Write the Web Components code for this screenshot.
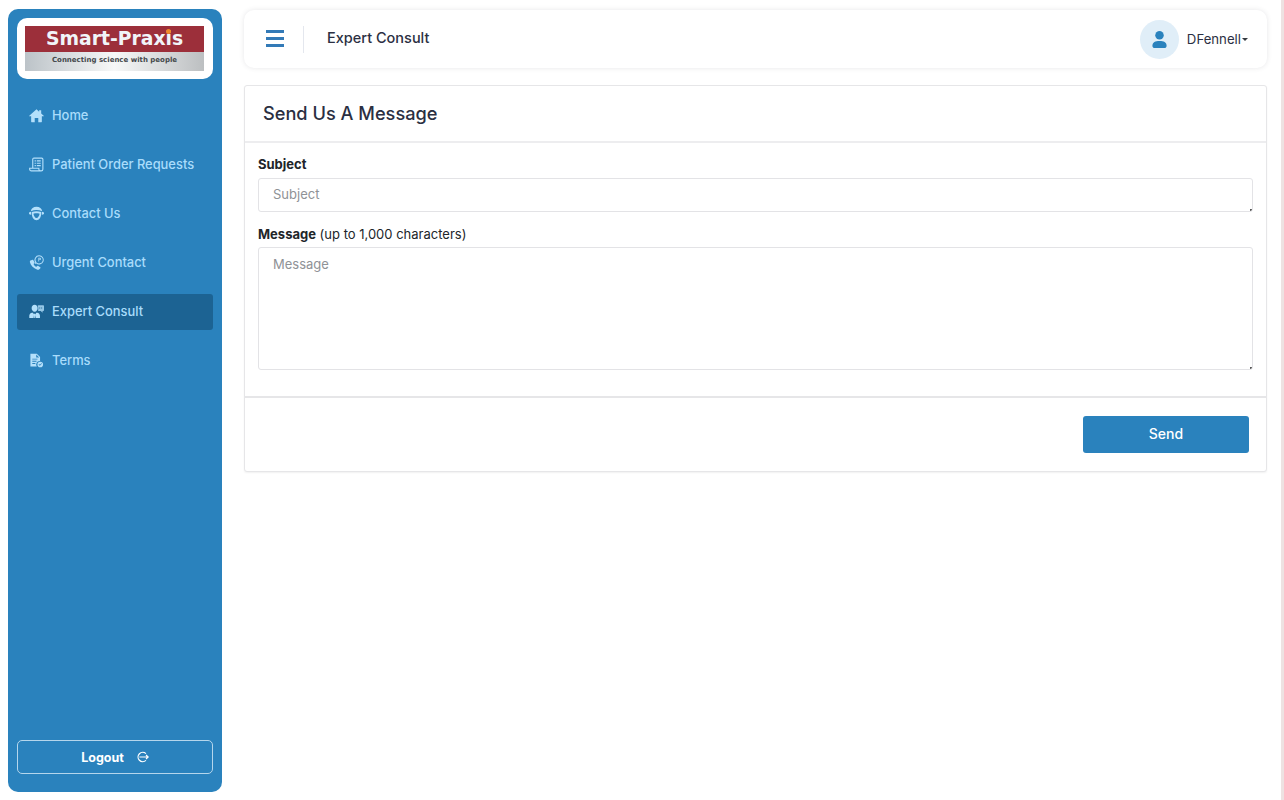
<!DOCTYPE html>
<html>
<head>
<meta charset="utf-8">
<title>Expert Consult</title>
<style>
  html, body { margin: 0; height: 100%; background: #fff; }
  body { font-family: Inter, "Liberation Sans", sans-serif; color: #212529; overflow: hidden; }
</style>
</head>
<body>
<app-shell>
  <side-bar slot="side">
    <nav-item icon="home">Home</nav-item>
    <nav-item icon="orders">Patient Order Requests</nav-item>
    <nav-item icon="contact">Contact Us</nav-item>
    <nav-item icon="urgent">Urgent Contact</nav-item>
    <nav-item icon="expert" active>Expert Consult</nav-item>
    <nav-item icon="terms">Terms</nav-item>
  </side-bar>
  <top-bar title="Expert Consult" user="DFennell"></top-bar>
  <message-card></message-card>
</app-shell>

<script>
const icons = {
  home: '<path d="M8 1.300 .3 8.200c-.3.3-.1.7.3.7H2.300v5.800c0 .3.2.5.5.5h3.300v-4.500h3.800V15.200h3.300c.3 0 .5-.2.5-.5V8.900h1.700c.4 0 .6-.4.3-.7L13 5.900V2.300h-2.200v1.600z"/>',
  orders: '<path fill="none" stroke="#b4e0fb" stroke-width="1.200" d="M4 12V2.500C4 1.700 4.500 1.200 5.300 1.200h8.200c.8 0 1.300.5 1.300 1.300V13c0 1-.7 1.800-1.800 1.800H2.500C1.400 14.800.7 14 .7 12.900V12H10.500v1c0 1 .8 1.800 2 1.800"/><path d="M6 3.500h1.300v1.300H6zm2.300 0h4.200v1.300H8.300zM6 6h1.300v1.300H6zm2.300 0h4.200v1.300H8.300zM6 8.500h1.300v1.300H6zm2.300 0h4.200v1.300H8.300z"/>',
  contact: '<path d="M8 .8c3.300 0 5.700 1.800 6 4.700-2-.8-3.900-1.200-6-1.200s-4 .4-6 1.200C2.300 2.600 4.700 .8 8 .8z"/><path d="M1 6.300 2.300 6.100v3.200L1 9.100C.2 8.900 0 8.400 0 7.700s.2-1.200 1-1.400zm14 0-1.300-.2v3.200l1.300-.2c.8-.2 1-.7 1-1.400s-.2-1.200-1-1.400z"/><path fill-rule="evenodd" d="M3 6.500C4.600 6 6.300 5.700 8 5.700s3.400.3 5 .8v1.700c0 3.300-2 6.900-5 6.900S3 11.500 3 8.200zm1.700 1.700c.3 1.900 1.600 4.600 3.300 4.600s3-2.700 3.300-4.600C9 7.700 7 7.700 4.700 8.200z"/>',
  urgent: '<path d="M3.300 5.300c.4-.3.900-.3 1.200.1l1.400 2.200c.2.300.2.700-.1 1l-.9.900c.5 1.300 1.600 2.500 3 3.100l1-.9c.3-.2.700-.3 1-.1l2.100 1.400c.4.300.5.800.1 1.100l-1.100 1.100c-.5.500-1.300.7-2 .5C4.300 13.800 1.600 11 .9 7.500c-.1-.6.100-1.300.5-1.700z"/><path fill-rule="evenodd" d="M10.800 .3a4.900 4.900 0 1 1-3.100 8.700L6 9.600l.6-1.800A4.900 4.900 0 0 1 10.800 .3zm0 1.100A3.800 3.800 0 0 0 7.800 7.500l-.1.500.5-.1a3.800 3.800 0 1 0 2.600-6.500z"/><path d="M10 3h1.300c.9 0 1.400.5 1.400 1.200s-.5 1.200-1.400 1.200h-.5V6.900H10zm.8.700v1h.4c.4 0 .6-.2.6-.5s-.2-.5-.6-.5z"/>',
  expert: '<path d="M6 .7c1.900 0 3.200 1.500 3.200 3.500S7.900 8.200 6 8.200 2.800 6.200 2.800 4.200 4.100 .7 6 .7z"/><path d="M.3 15v-2.500c0-1.800 1.200-3 3-3.300h.9l1.200 2-.5 3.800zm11.400 0v-2.500c0-1.800-1.200-3-3-3.300h-.9l-1.200 2 .5 3.800zM6 10l.8 1-.4 4h-.8l-.4-4z"/><path fill-rule="evenodd" d="M10 1.300h5.200c.5 0 .8.300.8.800v4.600c0 .5-.3.800-.8.800h-.7V9.300L12.500 7.500H10c-.1 0-.2 0-.3-.1.300-.9.300-4.500-.5-5.500.2-.4.500-.6.800-.6z" opacity=".8"/><path fill="#1c6393" d="M11 3.800h1v1h-1zm2 0h1v1h-1z"/>',
  terms: '<path fill-rule="evenodd" d="M1.500 .7h6.800L11.800 4.200v4.500a3.700 3.700 0 0 0-3.500 5.800H1.500zM7.700 1.700V4.900h3.100zM3.500 6v1h5.500V6zm0 2.300v1h4.500v-1zm0 2.300v1h3.300v-1z"/><path fill-rule="evenodd" d="M12 9.200a3 3 0 1 1 0 6 3 3 0 0 1 0-6zm1.300 1.600-1.700 1.800-.8-.8-.6.6 1.400 1.300 2.300-2.400z"/>'
}

class AppShell extends HTMLElement {
  constructor () {
    super()
    this.attachShadow({ mode: 'open' })
    this.shadowRoot.innerHTML = `
      <style>
        :host { display: flex; height: 800px; box-sizing: border-box; padding: 9px 14px 8px 8px; gap: 22px; border-right: 3px solid #eee2e2; }
        .main { flex: 1; min-width: 0; display: flex; flex-direction: column; gap: 17px; padding-top: 1px; }
      </style>
      <slot name="side"></slot>
      <div class="main"><slot></slot></div>`
  }
}

class SideBar extends HTMLElement {
  constructor () {
    super()
    this.attachShadow({ mode: 'open' })
    this.shadowRoot.innerHTML = `
      <style>
        :host { display: flex; flex-direction: column; width: 214px; flex: none; box-sizing: border-box; background: #2a82bd; border-radius: 10px; padding: 9px 9px 18px 9px; }
        .logo-box { height: 61px; box-sizing: border-box; background: #fff; border-radius: 10px; padding: 8px 9px 8px 8px; display: flex; }
        .logo { flex: 1; display: flex; flex-direction: column; }
        .brand { height: 26px; background: #9c2f3a; color: #f1f4f8; font: 700 18.800px/26px "DejaVu Sans", sans-serif; text-align: center; position: relative; white-space: nowrap; }
        .dot { position: absolute; left: 141px; top: 3px; width: 5px; height: 5px; border-radius: 50%; background: #ef8a2a; }
        .tag { height: 19px; background: linear-gradient(90deg, #bcc3c8, #f7f8f8 50%, #bcbfc1); color: #44484b; font: 700 7px/17px "DejaVu Sans", sans-serif; text-align: center; white-space: nowrap; }
        nav { display: flex; flex-direction: column; gap: 13px; margin-top: 19px; flex: 1; }
        button { font: 700 12.500px Inter, sans-serif; color: #fff; height: 34px; background: transparent; border: 1px solid #b5d6ec; border-radius: 5px; display: flex; align-items: center; justify-content: center; gap: 11px; padding: 0; }
        svg { width: 14px; height: 14px; fill: none; stroke: #fff; stroke-width: 1.400; }
      </style>
      <div class="logo-box">
        <div class="logo">
          <div class="brand">Smart-Praxis<span class="dot"></span></div>
          <div class="tag">Connecting science with people</div>
        </div>
      </div>
      <nav><slot></slot></nav>
      <button>Logout <svg viewBox="0 0 16 16"><path d="M12.500 4.200A5.300 5.300 0 1 0 12.500 11.800M5 8h10M12.600 5.800 15 8l-2.400 2.200" /></svg></button>`
  }
}

class NavItem extends HTMLElement {
  constructor () {
    super()
    this.attachShadow({ mode: 'open' })
    this.shadowRoot.innerHTML = `
      <style>
        :host { display: flex; align-items: center; height: 36px; box-sizing: border-box; padding: 0 0 1px 12px; gap: 8px; color: #a9dcfb; font: 500 12.900px Inter, sans-serif; border-radius: 3px; }
        :host([active]) { background: #1c6393; }
        svg { width: 15px; height: 15px; fill: #b4e0fb; flex: none; }
      </style>
      <svg viewBox="0 0 16 16">${icons[this.getAttribute('icon')]}</svg>
      <slot></slot>`
  }
}

class TopBar extends HTMLElement {
  constructor () {
    super()
    this.attachShadow({ mode: 'open' })
    this.shadowRoot.innerHTML = `
      <style>
        :host { display: flex; align-items: center; height: 58px; flex: none; background: #fff; border-radius: 10px; box-shadow: 0 0 5px rgba(60, 60, 80, .13); padding: 0 19px 0 22px; }
        .menu { width: 18px; height: 17px; display: flex; flex-direction: column; justify-content: space-between; margin-top: -1px; }
        .menu i { display: block; height: 3px; background: #337ab7; }
        .sep { width: 1px; height: 27px; background: #e4e7ee; margin: 0 23px 0 19px; }
        h1 { font: 500 14.500px Inter, sans-serif; color: #2b2f42; margin: 0 0 3px; flex: 1; }
        .avatar { width: 39px; height: 39px; border-radius: 50%; background: #e0eef8; display: flex; align-items: center; justify-content: center; margin-right: 8px; }
        .avatar svg { width: 17px; height: 19px; fill: #2a82bd; }
        .user { font: 400 13.200px Inter, sans-serif; color: #2b2f42; }
        .caret { width: 0; height: 0; border: 3.500px solid transparent; border-top-color: #343a40; border-bottom: 0; margin-left: 1px; }
      </style>
      <div class="menu"><i></i><i></i><i></i></div>
      <div class="sep"></div>
      <h1>${this.getAttribute('title')}</h1>
      <div class="avatar"><svg viewBox="0 0 18 20"><circle cx="9" cy="5.500" r="4.500"/><path d="M1.500 16.500c0-3.500 3-5 7.500-5s7.500 1.500 7.500 5c0 1.500-1 2.500-2.500 2.500H4c-1.500 0-2.500-1-2.500-2.500z"/></svg></div>
      <span class="user">${this.getAttribute('user')}</span><span class="caret"></span>`
  }
}

class MessageCard extends HTMLElement {
  constructor () {
    super()
    this.attachShadow({ mode: 'open' })
    this.shadowRoot.innerHTML = `
      <style>
        :host { display: block; background: #fff; border: 1px solid #e6e6e8; border-radius: 3px; box-shadow: 0 1px 2px rgba(0, 0, 0, .06); }
        header { height: 55px; box-sizing: content-box; display: flex; align-items: center; padding-left: 18px; border-bottom: 2px solid #ededef; }
        h2 { font: 500 18.200px Inter, sans-serif; color: #2b2f42; margin: 0 0 1px; }
        .body { padding: 12px 13px 26px 13px; display: flex; flex-direction: column; }
        label { font: 400 13px/18px Inter, sans-serif; color: #212529; margin-bottom: 5px; }
        label b { font-weight: 700; }
        .msg { margin-top: 13px; margin-bottom: 4px; }
        input, textarea { display: block; width: 100%; box-sizing: border-box; font: 400 13px Inter, sans-serif; border: 1px solid #e3e3e6; border-radius: 3px; padding: 0 14px 2px; color: #212529; margin: 0; outline: none; resize: none; background: #fff linear-gradient(#555, #555) no-repeat right 0 bottom 0 / 2px 2px; }
        input { height: 34px; }
        textarea { height: 123px; padding-top: 8px; }
        ::placeholder { color: #8f9296; opacity: 1; }
        footer { border-top: 2px solid #e6e6e8; height: 75px; display: flex; align-items: center; justify-content: flex-end; padding: 0 17px 0 0; box-sizing: border-box; }
        button { width: 166px; height: 37px; background: #2a82bd; color: #fff; font: 500 14px Inter, sans-serif; border: 0; border-radius: 3px; padding: 0 0 2px; }
      </style>
      <header><h2>Send Us A Message</h2></header>
      <div class="body">
        <label><b>Subject</b></label>
        <input placeholder="Subject">
        <label class="msg"><b>Message</b> (up to 1,000 characters)</label>
        <textarea placeholder="Message"></textarea>
      </div>
      <footer><button>Send</button></footer>`
  }
}

customElements.define('app-shell', AppShell)
customElements.define('side-bar', SideBar)
customElements.define('nav-item', NavItem)
customElements.define('top-bar', TopBar)
customElements.define('message-card', MessageCard)
</script>
</body>
</html>
